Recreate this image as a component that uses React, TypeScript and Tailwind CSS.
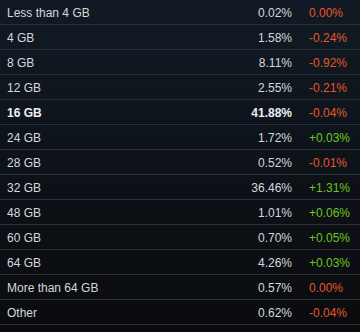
import React from "react";

type Row = {
  label: string;
  pct: string;
  change: string;
  bold?: boolean;
};

const rows: Row[] = [
  { label: "Less than 4 GB", pct: "0.02%", change: "0.00%" },
  { label: "4 GB", pct: "1.58%", change: "-0.24%" },
  { label: "8 GB", pct: "8.11%", change: "-0.92%" },
  { label: "12 GB", pct: "2.55%", change: "-0.21%" },
  { label: "16 GB", pct: "41.88%", change: "-0.04%", bold: true },
  { label: "24 GB", pct: "1.72%", change: "+0.03%" },
  { label: "28 GB", pct: "0.52%", change: "-0.01%" },
  { label: "32 GB", pct: "36.46%", change: "+1.31%" },
  { label: "48 GB", pct: "1.01%", change: "+0.06%" },
  { label: "60 GB", pct: "0.70%", change: "+0.05%" },
  { label: "64 GB", pct: "4.26%", change: "+0.03%" },
  { label: "More than 64 GB", pct: "0.57%", change: "0.00%" },
  { label: "Other", pct: "0.62%", change: "-0.04%" },
];

export default function App() {
  return (
    <div
      className="w-[360px] h-[332px] overflow-hidden bg-gradient-to-b from-[#111a24] to-[#0a0b0e] text-[12px] text-[#d3d8dd]"
      style={{ fontFamily: '"Liberation Sans", Arial, sans-serif' }}
    >
      {rows.map((row) => (
        <div
          key={row.label}
          className={`flex items-start h-[25px] px-[7px] pt-[4px] leading-[18px] border-b border-[#2b3036] ${
            row.bold ? "font-bold text-[#eef0f2]" : ""
          }`}
        >
          <div className="flex-1">{row.label}</div>
          <div className="w-[80px] text-right">{row.pct}</div>
          <div
            className={`w-[61px] pl-[17px] font-normal ${
              row.change.startsWith("+") ? "text-[#6cc51c]" : "text-[#e2582c]"
            }`}
          >
            {row.change}
          </div>
        </div>
      ))}
    </div>
  );
}
